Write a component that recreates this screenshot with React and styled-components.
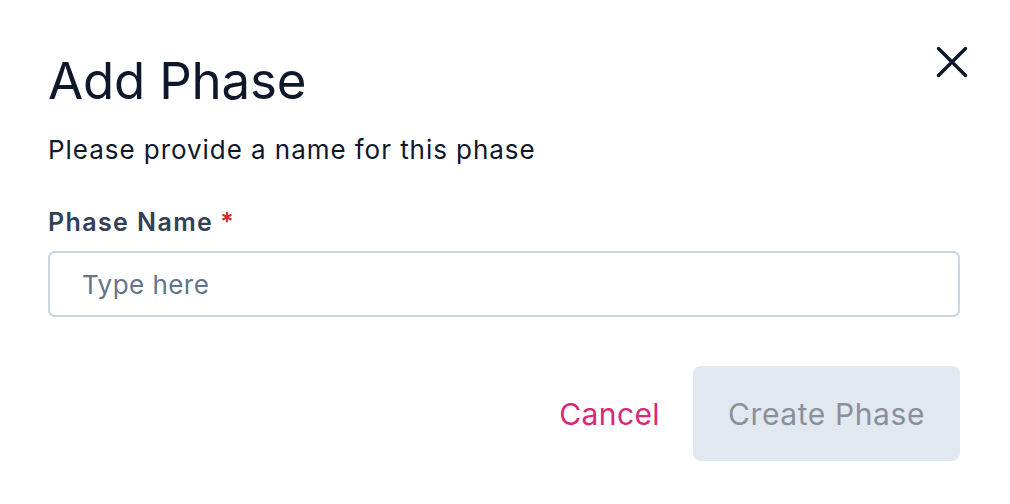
import React from "react";
import styled, { createGlobalStyle } from "styled-components";

const Global = createGlobalStyle`
  html, body { margin: 0; padding: 0; background: #ffffff; }
  body { font-family: Inter, "Noto Sans", sans-serif; }
  * { box-sizing: border-box; }
`;

const Dialog = styled.div`
  position: relative;
  width: 1010px;
  height: 504px;
  padding: 50px 50px 0 48px;
  display: flex;
  flex-direction: column;
  background: #fff;
`;

const Title = styled.h1`
  margin: 0;
  font-size: 51px;
  line-height: 62px;
  font-weight: 400;
  color: #0f172a;
  letter-spacing: -0.2px;
`;

const Subtitle = styled.p`
  margin: 17px 0 0;
  font-size: 26px;
  line-height: 42px;
  color: #0f172a;
  letter-spacing: 0.95px;
`;

const Label = styled.label`
  margin-top: 32px;
  font-size: 25px;
  line-height: 38px;
  font-weight: 600;
  color: #334155;
  letter-spacing: 1.4px;
`;

const Required = styled.span`
  color: #dc2626;
  margin-left: 7px;
`;

const Input = styled.input`
  margin-top: 10px;
  height: 66px;
  width: 100%;
  border: 2px solid #cbd5e1;
  border-radius: 7px;
  padding: 0 32px;
  font-family: Inter, sans-serif;
  font-size: 26px;
  letter-spacing: 0.45px;
  color: #0f172a;
  outline: none;
  &::placeholder { color: #64748b; }
`;

const Footer = styled.div`
  margin-top: 49px;
  display: flex;
  justify-content: flex-end;
  align-items: center;
  gap: 33px;
`;

const TextButton = styled.button`
  border: none;
  background: none;
  padding: 0;
  font-family: Inter, sans-serif;
  font-size: 30px;
  letter-spacing: 0.4px;
  color: #db2777;
  cursor: pointer;
`;

const PrimaryButton = styled.button`
  width: 267px;
  height: 95px;
  border: none;
  border-radius: 8px;
  background: #e2e8f0;
  color: #8b8f98;
  font-family: Inter, sans-serif;
  font-size: 30px;
  letter-spacing: 0.6px;
`;

const Close = styled.button`
  position: absolute;
  top: 44px;
  right: 40px;
  width: 36px;
  height: 36px;
  border: none;
  background: none;
  padding: 0;
  display: flex;
  align-items: center;
  justify-content: center;
`;

export default function App() {
  return (
    <>
      <Global />
      <Dialog>
        <Close aria-label="Close">
          <svg width="36" height="36" viewBox="0 0 36 36">
            <path d="M4.5 4.5 L31.5 31.5 M31.5 4.5 L4.5 31.5" stroke="#0f172a" strokeWidth="3.4" strokeLinecap="round" />
          </svg>
        </Close>
        <Title>Add Phase</Title>
        <Subtitle>Please provide a name for this phase</Subtitle>
        <Label>
          Phase Name<Required>*</Required>
        </Label>
        <Input placeholder="Type here" />
        <Footer>
          <TextButton>Cancel</TextButton>
          <PrimaryButton disabled>Create Phase</PrimaryButton>
        </Footer>
      </Dialog>
    </>
  );
}
